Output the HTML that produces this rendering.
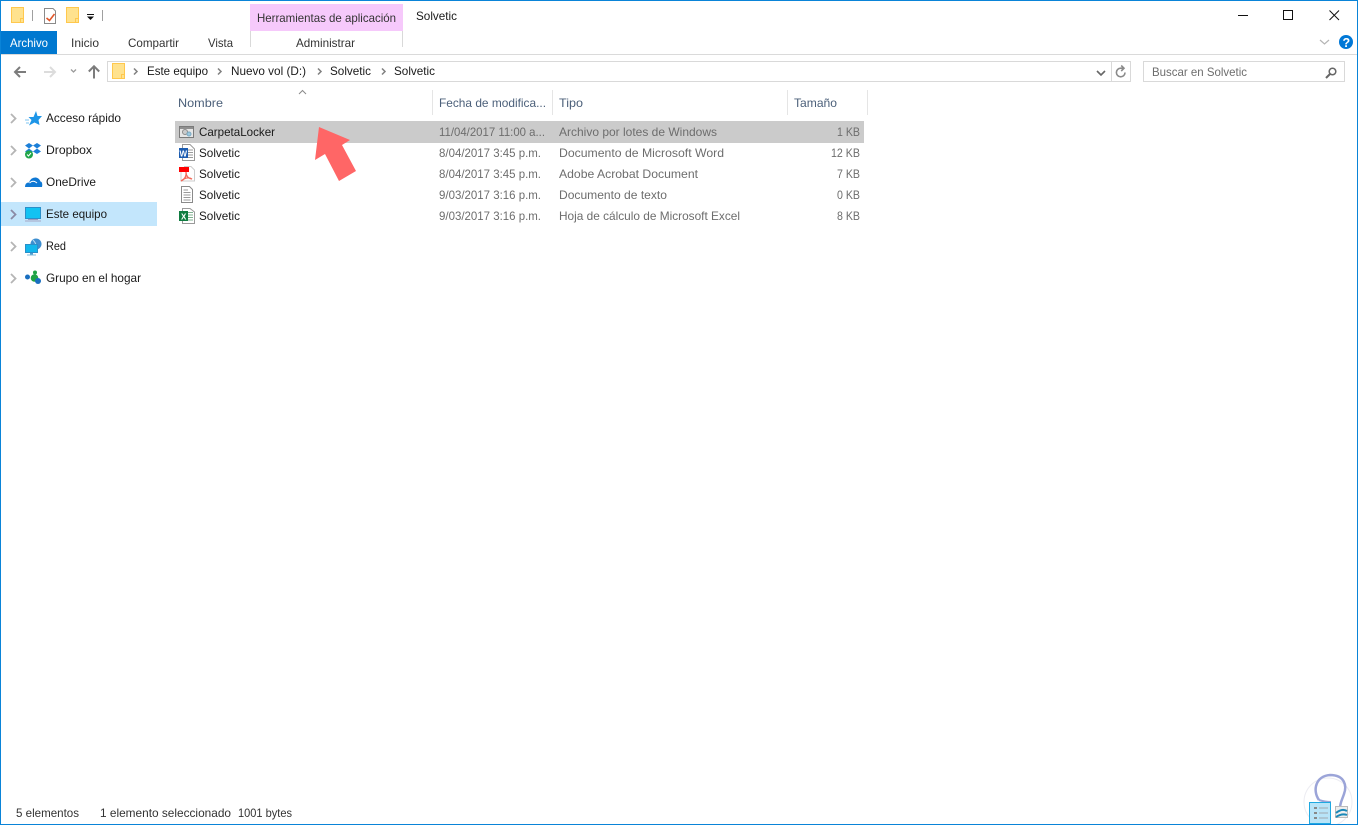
<!DOCTYPE html>
<html><head><meta charset="utf-8"><style>
html,body{margin:0;padding:0;background:#fff;width:1358px;height:825px;overflow:hidden}
svg{display:block}
text{font-family:"Liberation Sans",sans-serif;font-size:12px;fill:#1a1a1a}
.g{fill:#6d6d6d}.h{fill:#4c607a}.d{fill:#333}
</style></head><body>
<svg width="1358" height="825" viewBox="0 0 1358 825" xmlns="http://www.w3.org/2000/svg">
<defs>
<g id="folder"><path d="M.5.5H12.5V15.5H.5Z" fill="#ffe28e" stroke="#ffc84d"/><path d="M9.5 15.5V11.5H12.5" fill="none" stroke="#ffc84d"/></g>
<path id="chev" d="M0 0L4.500 4.500L0 9" fill="none" stroke="#b5b5b5" stroke-width="1.8"/>
<path id="mini" d="M0 0L3 3L0 6" fill="none" stroke="#808080" stroke-width="1.5"/>
<g id="mon"><rect x=".5" y=".5" width="15" height="11" fill="#12c2f2" stroke="#2a8fc9"/></g>
</defs>

<rect x=".5" y=".5" width="1357" height="824" fill="#fff" stroke="#0a84d8"/>
<!-- quick access -->
<use href="#folder" x="11" y="7"/>
<rect x="32" y="10" width="1" height="11" fill="#a0a0a0"/>
<path d="M44.500 8.500H53L55.500 11V23.500H44.500Z" fill="#fff" stroke="#8a8a8a"/>
<path d="M46.500 18L49.500 20.500L54.500 14" fill="none" stroke="#e0562a" stroke-width="1.600"/>
<use href="#folder" x="66" y="7"/>
<rect x="87" y="14" width="7" height="1" fill="#111"/><path d="M87 16.500H94L90.500 20Z" fill="#111"/>
<rect x="102" y="10" width="1" height="11" fill="#a0a0a0"/>

<!-- contextual tab -->
<rect x="250" y="4" width="153" height="27" fill="#f6c9fb"/>
<rect x="250" y="31" width="1" height="16" fill="#d9d9d9"/><rect x="402" y="31" width="1" height="16" fill="#d9d9d9"/>
<text class="d" x="257" y="22" textLength="139" lengthAdjust="spacingAndGlyphs">Herramientas de aplicación</text>
<text x="416" y="20" textLength="41" lengthAdjust="spacingAndGlyphs">Solvetic</text>

<!-- window controls -->
<rect x="1238" y="15" width="10" height="1" fill="#111"/>
<rect x="1283.500" y="10.500" width="9" height="9" fill="none" stroke="#111"/>
<path d="M1329.500 10.500L1339 20M1339 10.500L1329.500 20" stroke="#111" fill="none"/>

<!-- ribbon -->
<rect x="1" y="54" width="1356" height="1" fill="#dadada"/>
<rect x="1" y="31" width="56" height="23" fill="#0078d0"/>
<text x="10" y="47" textLength="38" lengthAdjust="spacingAndGlyphs" style="fill:#fff">Archivo</text>
<text class="d" x="71" y="47" textLength="28" lengthAdjust="spacingAndGlyphs">Inicio</text>
<text class="d" x="128" y="47" textLength="51" lengthAdjust="spacingAndGlyphs">Compartir</text>
<text class="d" x="208" y="47" textLength="25" lengthAdjust="spacingAndGlyphs">Vista</text>
<text class="d" x="296" y="47" textLength="59" lengthAdjust="spacingAndGlyphs">Administrar</text>
<path d="M1320 40L1324.500 44L1329 40" fill="none" stroke="#b5b5b5" stroke-width="1.200"/>
<circle cx="1346" cy="42" r="7" fill="#0078d7"/>
<text x="1342.500" y="47" style="fill:#fff;font-size:12.500px;font-weight:bold">?</text>

<!-- nav buttons -->
<path d="M26 72H15M20 67L15 72L20 77" fill="none" stroke="#7c7c7c" stroke-width="2"/>
<path d="M44 72H55M50 67L55 72L50 77" fill="none" stroke="#dcdcdc" stroke-width="2"/>
<path d="M71 69.500L73.500 72L76 69.500" fill="none" stroke="#9a9a9a" stroke-width="1.300"/>
<path d="M94 78.500V66.500M88.800 71.500L94 66.300L99.200 71.500" fill="none" stroke="#7c7c7c" stroke-width="2"/>

<!-- address bar -->
<rect x="107.500" y="61.500" width="1023" height="20" fill="#fff" stroke="#d9d9d9"/>
<rect x="1111" y="62" width="1" height="19" fill="#d9d9d9"/>
<use href="#folder" x="112" y="63"/>
<use href="#mini" x="134" y="68.500"/><use href="#mini" x="218" y="68.500"/><use href="#mini" x="318" y="68.500"/><use href="#mini" x="382" y="68.500"/>
<text x="147" y="75" textLength="61" lengthAdjust="spacingAndGlyphs">Este equipo</text>
<text x="231" y="75" textLength="75" lengthAdjust="spacingAndGlyphs">Nuevo vol (D:)</text>
<text x="330" y="75" textLength="41" lengthAdjust="spacingAndGlyphs">Solvetic</text>
<text x="394" y="75" textLength="41" lengthAdjust="spacingAndGlyphs">Solvetic</text>
<path d="M1097 71L1101 75L1105 71" fill="none" stroke="#666" stroke-width="1.600"/>
<path d="M1125 72.500A4.300 4.300 0 1 1 1120.700 68.200H1124M1121.200 65.500L1124 68.200L1121.200 71" fill="none" stroke="#8a8a8a" stroke-width="1.600"/>

<!-- search -->
<rect x="1143.500" y="61.500" width="201" height="20" fill="#fff" stroke="#d9d9d9"/>
<text class="g" x="1152" y="76" textLength="95" lengthAdjust="spacingAndGlyphs">Buscar en Solvetic</text>
<circle cx="1332.500" cy="71.500" r="3.300" fill="none" stroke="#666" stroke-width="1.500"/>
<path d="M1330 74L1326 78" stroke="#666" stroke-width="2"/>

<!-- nav pane -->
<rect x="1" y="202" width="156" height="24" fill="#c3e6fc"/>
<use href="#chev" x="11" y="114"/><use href="#chev" x="11" y="146"/><use href="#chev" x="11" y="178"/>
<path d="M11 210L15.500 214.500L11 219" fill="none" stroke="#8a8aa5" stroke-width="1.800"/>
<use href="#chev" x="11" y="242"/><use href="#chev" x="11" y="274"/>

<path d="M36 111L37.500 116H42L38.500 120L39.500 125L34.500 122.500L29 125.500L31.500 120L28.500 117H33.500Z" fill="#1e96e8"/>
<path d="M25 120H29M26 123H29" stroke="#7cc4f2"/>

<path d="M29 143L33 145.500L29 148.500L25 145.500ZM37 143L41 145.500L37 148.500L33 145.500ZM29 148.500L33 151.500L29 154L25 151.500ZM37 148.500L41 151.500L37 154L33 151.500Z" fill="#1b7fd8"/>
<circle cx="29" cy="154.500" r="4" fill="#21a64a"/><path d="M27 154.500L28.500 156L31 153" stroke="#fff" fill="none"/>

<path d="M25 187Q25 182.500 29 182.500Q31 177 36 177.500Q39 178 40.500 181.500Q43 182 42 187Z" fill="#0f78d4"/>
<path d="M29.500 183Q33 179.500 37 183" stroke="#fff" fill="none"/>

<use href="#mon" x="25" y="207"/>
<rect x="28" y="219" width="10" height="1" fill="#9c9cc0"/>
<rect x="25" y="220.500" width="16" height="1" fill="#a6a6c4"/>

<circle cx="36" cy="244" r="5.500" fill="#3d8ed0"/>
<path d="M33 240Q37 244 36 249" stroke="#b7dcf2" fill="none"/>
<rect x="25.500" y="244.500" width="12" height="8" fill="#12b6ec" stroke="#2a8fc9"/>
<rect x="30" y="253" width="3" height="1.500" fill="#4d9ed0"/><rect x="27" y="254.500" width="9" height="1" fill="#7fb8da"/>

<circle cx="27.500" cy="277" r="2.500" fill="#1a6fc0"/>
<circle cx="35" cy="272.500" r="2" fill="#1fa345"/>
<circle cx="34.500" cy="278" r="3.800" fill="#1fa345"/>
<circle cx="38" cy="281" r="3" fill="#1a6fc0"/>

<text x="46" y="122" textLength="75" lengthAdjust="spacingAndGlyphs">Acceso rápido</text>
<text x="46" y="154" textLength="46" lengthAdjust="spacingAndGlyphs">Dropbox</text>
<text x="46" y="186" textLength="50" lengthAdjust="spacingAndGlyphs">OneDrive</text>
<text x="46" y="218" textLength="61" lengthAdjust="spacingAndGlyphs">Este equipo</text>
<text x="46" y="250" textLength="20" lengthAdjust="spacingAndGlyphs">Red</text>
<text x="46" y="282" textLength="95" lengthAdjust="spacingAndGlyphs">Grupo en el hogar</text>

<!-- column headers -->
<path d="M299 94L302.500 90.500L306 94" fill="none" stroke="#8a8a8a"/>
<rect x="432" y="90" width="1" height="25" fill="#e5e5e5"/>
<rect x="552" y="90" width="1" height="25" fill="#e5e5e5"/>
<rect x="787" y="90" width="1" height="25" fill="#e5e5e5"/>
<rect x="867" y="90" width="1" height="25" fill="#e5e5e5"/>
<text class="h" x="178" y="107" textLength="45" lengthAdjust="spacingAndGlyphs">Nombre</text>
<text class="h" x="439" y="107" textLength="107" lengthAdjust="spacingAndGlyphs">Fecha de modifica...</text>
<text class="h" x="559" y="107" textLength="24" lengthAdjust="spacingAndGlyphs">Tipo</text>
<text class="h" x="794" y="107" textLength="43" lengthAdjust="spacingAndGlyphs">Tamaño</text>

<!-- rows -->
<rect x="175" y="121" width="689" height="22" fill="#cbcbcb"/>

<rect x="179.500" y="126.500" width="14" height="11" fill="#e6e6e6" stroke="#7a7a7a"/>
<rect x="180" y="127" width="13" height="2" fill="#8f8f8f"/>
<circle cx="185" cy="132" r="2.500" fill="#ccc" stroke="#8a8a8a"/>
<circle cx="189" cy="134" r="2" fill="#9cc8de" stroke="#7aa9c2"/>

<path d="M182.500 144.500H190L194.500 149V160.500H182.500Z" fill="#fff" stroke="#9a9a9a"/>
<path d="M187 150H193M187 152.500H193M187 155H193M187 157.500H193" stroke="#9a9a9a"/>
<rect x="179" y="148" width="9" height="10" fill="#1c5cb0"/>
<text x="179.500" y="156.500" style="fill:#fff;font-size:8px;font-weight:bold">W</text>

<path d="M184 166.500H191L194.500 170V181H181V172" fill="#fff" stroke="#ccc"/>
<rect x="179" y="167" width="10" height="5" fill="#f00"/>
<path d="M186 172Q187 178 181 181Q187 176 192 179Q186 178 186 172" fill="none" stroke="#f26a5a" stroke-width="1.300"/>

<path d="M181.500 186.500H189.500L192.500 189.500V202.500H181.500Z" fill="#fff" stroke="#8a8a8a"/>
<path d="M183.500 190H188M183.500 192.500H190.500M183.500 195H190.500M183.500 197.500H190.500M183.500 200H190.500" stroke="#9a9a9a"/>

<path d="M182.500 208.500H190L194.500 212V223.500H182.500Z" fill="#fff" stroke="#9a9a9a"/>
<path d="M188 212.500H193M188 215H193M188 217.500H193M188 220H193" stroke="#7fb08f"/>
<rect x="179" y="211" width="9" height="10" fill="#107c41"/>
<text x="181" y="219.500" style="fill:#fff;font-size:8px;font-weight:bold">X</text>

<text x="199" y="136" textLength="76" lengthAdjust="spacingAndGlyphs">CarpetaLocker</text>
<text x="199" y="157" textLength="41" lengthAdjust="spacingAndGlyphs">Solvetic</text>
<text x="199" y="178" textLength="41" lengthAdjust="spacingAndGlyphs">Solvetic</text>
<text x="199" y="199" textLength="41" lengthAdjust="spacingAndGlyphs">Solvetic</text>
<text x="199" y="220" textLength="41" lengthAdjust="spacingAndGlyphs">Solvetic</text>

<text class="g" x="439" y="136" textLength="106" lengthAdjust="spacingAndGlyphs">11/04/2017 11:00 a...</text>
<text class="g" x="439" y="157" textLength="102" lengthAdjust="spacingAndGlyphs">8/04/2017 3:45 p.m.</text>
<text class="g" x="439" y="178" textLength="102" lengthAdjust="spacingAndGlyphs">8/04/2017 3:45 p.m.</text>
<text class="g" x="439" y="199" textLength="102" lengthAdjust="spacingAndGlyphs">9/03/2017 3:16 p.m.</text>
<text class="g" x="439" y="220" textLength="102" lengthAdjust="spacingAndGlyphs">9/03/2017 3:16 p.m.</text>
<text class="g" x="559" y="136" textLength="158" lengthAdjust="spacingAndGlyphs">Archivo por lotes de Windows</text>
<text class="g" x="559" y="157" textLength="165" lengthAdjust="spacingAndGlyphs">Documento de Microsoft Word</text>
<text class="g" x="559" y="178" textLength="139" lengthAdjust="spacingAndGlyphs">Adobe Acrobat Document</text>
<text class="g" x="559" y="199" textLength="108" lengthAdjust="spacingAndGlyphs">Documento de texto</text>
<text class="g" x="559" y="220" textLength="181" lengthAdjust="spacingAndGlyphs">Hoja de cálculo de Microsoft Excel</text>
<text class="g" x="837" y="136" textLength="23" lengthAdjust="spacingAndGlyphs">1 KB</text>
<text class="g" x="831" y="157" textLength="29" lengthAdjust="spacingAndGlyphs">12 KB</text>
<text class="g" x="837" y="178" textLength="23" lengthAdjust="spacingAndGlyphs">7 KB</text>
<text class="g" x="837" y="199" textLength="23" lengthAdjust="spacingAndGlyphs">0 KB</text>
<text class="g" x="837" y="220" textLength="23" lengthAdjust="spacingAndGlyphs">8 KB</text>

<!-- arrow -->
<path d="M319 127L350 140L342 145L356 171L339 181L325 154L315 160Z" fill="#ff6666"/>

<!-- status -->
<text class="d" x="16" y="817" textLength="63" lengthAdjust="spacingAndGlyphs">5 elementos</text>
<text class="d" x="100" y="817" textLength="131" lengthAdjust="spacingAndGlyphs">1 elemento seleccionado</text>
<text class="d" x="238" y="817" textLength="54" lengthAdjust="spacingAndGlyphs">1001 bytes</text>

<!-- watermark -->
<circle cx="1328" cy="802" r="24" fill="#fff" stroke="#ececf2"/>
<path d="M1319 800C1312 790 1316 776 1330 775C1345 775 1347 786 1344 794C1342 800 1340 803 1340 808" fill="none" stroke="#9ba4d8" stroke-width="2.500"/>
<path d="M1319 800Q1325 802 1331 802" fill="none" stroke="#9ba4d8" stroke-width="2"/>
<rect x="1309.500" y="802.500" width="21" height="21" fill="#b8e4f8" stroke="#1fa8e0"/>
<path d="M1314 808H1317M1314 813H1317M1314 818H1317" stroke="#888" stroke-width="2"/>
<path d="M1319 808H1328M1319 813H1328M1319 818H1328" stroke="#a0a8b0"/>
<rect x="1335.500" y="806.500" width="12" height="11" fill="#eee" stroke="#bbb"/>
<path d="M1336 813Q1342 808 1347 811M1336 817Q1342 813 1347 815" stroke="#1a88b8" stroke-width="2" fill="none"/>

<rect x="0" y="824" width="1358" height="1" fill="#0a84d8"/>
<rect x="0" y="0" width="1" height="825" fill="#0a84d8"/>
<rect x="1357" y="0" width="1" height="825" fill="#0a84d8"/>
<rect x="0" y="0" width="1358" height="1" fill="#0a84d8"/>
</svg>
</body></html>
